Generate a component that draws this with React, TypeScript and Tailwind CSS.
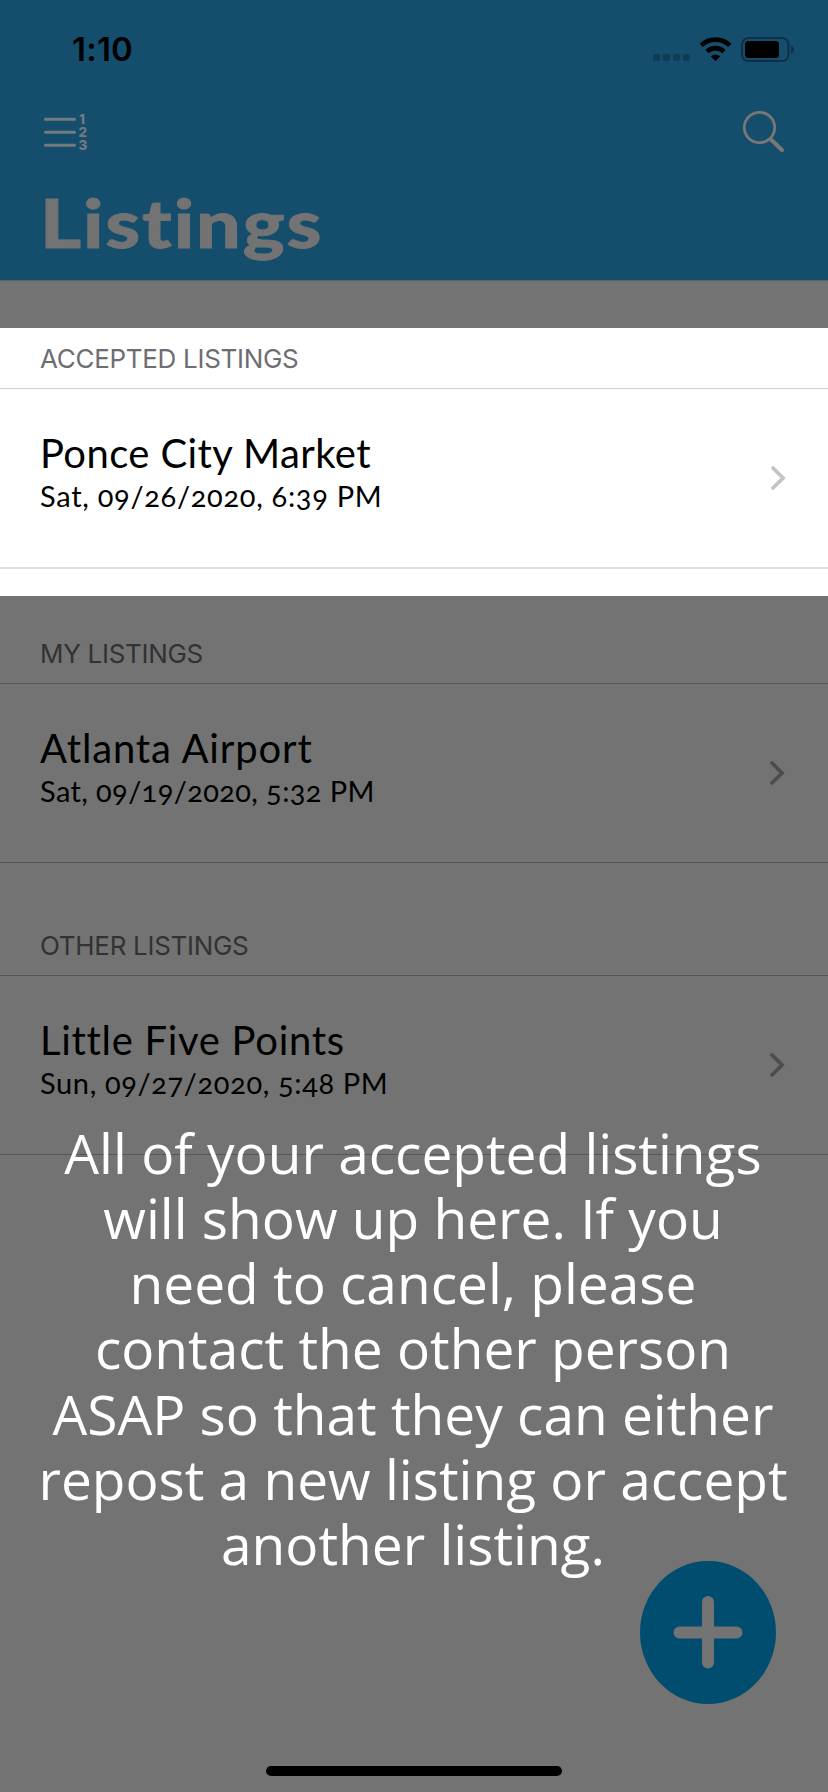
type Listing = {
  section: string;
  title: string;
  date: string;
  active?: boolean;
  titleSpacing: string;
  dateSpacing: string;
};

const listings: Listing[] = [
  {
    section: "ACCEPTED LISTINGS",
    title: "Ponce City Market",
    date: "Sat, 09/26/2020, 6:39 PM",
    active: true,
    titleSpacing: "tracking-[0.4px]",
    dateSpacing: "tracking-[0.7px]",
  },
  {
    section: "MY LISTINGS",
    title: "Atlanta Airport",
    date: "Sat, 09/19/2020, 5:32 PM",
    titleSpacing: "tracking-[0.85px]",
    dateSpacing: "tracking-[0.38px]",
  },
  {
    section: "OTHER LISTINGS",
    title: "Little Five Points",
    date: "Sun, 09/27/2020, 5:48 PM",
    titleSpacing: "tracking-[0.7px]",
    dateSpacing: "tracking-[0.63px]",
  },
];

const message = [
  "All of your accepted listings",
  "will show up here. If you",
  "need to cancel, please",
  "contact the other person",
  "ASAP so that they can either",
  "repost a new listing or accept",
  "another listing.",
];

function StatusBar() {
  return (
    <div className="flex h-[100px] items-start justify-between">
      <div className="pl-[72px] pt-[29px] font-['Inter'] text-[33px] font-semibold leading-[40px] tracking-[0.2px] text-black">
        1:10
      </div>
      <svg className="mr-[32px] mt-[34px]" width="144" height="32" viewBox="652 34 144 32">
        <g fill="#0f3b55">
          <rect x="653" y="54" width="7" height="7" rx="2" />
          <rect x="663" y="54" width="7" height="7" rx="2" />
          <rect x="673" y="54" width="7" height="7" rx="2" />
          <rect x="683" y="54" width="7" height="7" rx="2" />
        </g>
        <g fill="none" stroke="#000" strokeWidth="4.6">
          <path d="M701.2 45.4 A20.5 20.5 0 0 1 729.8 45.4" />
          <path d="M707 51.6 A12.2 12.2 0 0 1 724 51.6" />
        </g>
        <path d="M715.5 61 L710.8 56.4 A6.8 6.8 0 0 1 720.2 56.4 Z" fill="#000" />
        <rect x="742" y="38" width="46.5" height="23" rx="6.5" fill="none" stroke="#0c3148" strokeWidth="2" />
        <rect x="745" y="41" width="34" height="17" rx="3.5" fill="#000" />
        <path d="M791 45.2 C794.8 46.6 794.8 52.4 791 53.8 Z" fill="#0c3148" />
      </svg>
    </div>
  );
}

function Header() {
  return (
    <header className="h-[281px] border-b border-[#53646e] bg-[#154d6d]">
      <StatusBar />
      <div className="flex h-[60px] items-start justify-between px-[42px]">
        <svg className="mt-[12px]" width="48" height="40" viewBox="42 112 48 40">
          <path d="M45.5 119.3H74.5M45.5 132.3H74.5M45.5 145.3H74.5" stroke="#737b80" strokeWidth="3" strokeLinecap="round" />
          <g fill="#737b80" fontFamily="Inter" fontWeight="800" fontSize="13.5">
            <text x="79" y="124">1</text>
            <text x="78.5" y="137">2</text>
            <text x="78.5" y="150">3</text>
          </g>
        </svg>
        <svg className="mt-[8px]" width="46" height="48" viewBox="740 108 46 48">
          <circle cx="759.5" cy="127.5" r="15.2" fill="none" stroke="#777777" strokeWidth="2.8" />
          <path d="M771 139.5L782 150" stroke="#777777" strokeWidth="4.2" strokeLinecap="round" />
        </svg>
      </div>
      <h1 className="ml-[40px] mt-[22px] w-max origin-left scale-x-[1.18] font-['Lato'] text-[67px] font-black leading-[80px] tracking-[1.5px] text-[#737373] [-webkit-text-stroke:0.8px_#737373]">
        Listings
      </h1>
    </header>
  );
}

function Section({ item }: { item: Listing }) {
  return (
    <section className={item.active ? "h-[268px] bg-white text-black" : "h-[292px] text-black"}>
      <div
        className={`flex items-end border-b pb-[12px] pl-[40px] font-['Inter'] text-[26px] leading-[34px] tracking-[-0.3px] ${
          item.active
            ? "h-[61px] border-[#d2d2d4] text-[#6d6d72]"
            : "h-[88px] border-[#565657] text-[#323234]"
        }`}
      >
        {item.section}
      </div>
      <div
        className={`flex items-start justify-between pl-[40px] pr-[42px] ${
          item.active ? "h-[180px] border-b-2 border-[#e0e0e2]" : "h-[179px] border-b border-[#565657]"
        }`}
      >
        <div className="pt-[40px] font-['Lato'] [font-feature-settings:'onum']">
          <div className={`text-[40px] leading-[48px] ${item.titleSpacing}`}>{item.title}</div>
          <div className={`mt-[-1px] text-[29px] leading-[40px] ${item.dateSpacing}`}>{item.date}</div>
        </div>
        <svg
          className={item.active ? "mt-[75px] text-[#c4c4c6]" : "mr-[1px] mt-[75px] text-[#4d4d4e]"}
          width="16"
          height="28"
          viewBox="0 0 16 28"
        >
          <path d="M3 4L13 14L3 24" fill="none" stroke="currentColor" strokeWidth="3.8" strokeLinecap="round" strokeLinejoin="miter" />
        </svg>
      </div>
    </section>
  );
}

export default function App() {
  return (
    <div className="relative h-[1792px] w-[828px] overflow-hidden bg-[#737373]">
      <Header />
      <main className="pt-[47px]">
        {listings.map((item) => (
          <Section key={item.section} item={item} />
        ))}
      </main>
      <button
        aria-label="Add listing"
        className="absolute left-[640px] top-[1561px] flex h-[143px] w-[136px] items-center justify-center rounded-[50%] bg-[#004d70]"
      >
        <svg width="70" height="73" viewBox="0 0 70 73">
          <path d="M6.5 36.5H63.5M35 6V66.5" stroke="#737373" strokeWidth="12" strokeLinecap="round" />
        </svg>
      </button>
      <p className="absolute left-0 top-[1119.5px] w-[826px] whitespace-nowrap text-center font-['Open_Sans'] text-[55px] leading-[65.25px] text-white">
        {message.map((text) => (
          <span key={text} className="block">
            {text}
          </span>
        ))}
      </p>
      <div className="absolute left-[266px] top-[1766px] h-[10px] w-[296px] rounded-full bg-black" />
    </div>
  );
}
